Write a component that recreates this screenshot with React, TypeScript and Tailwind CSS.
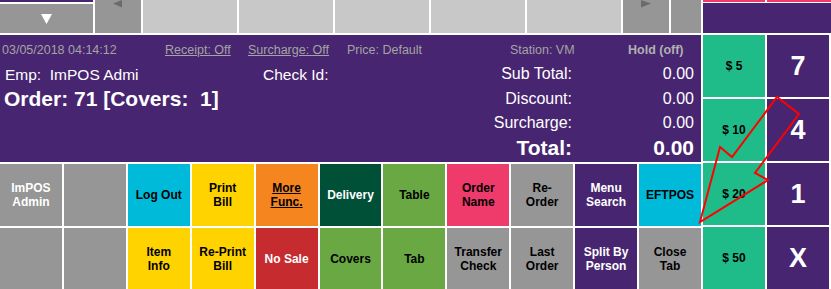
import React from 'react';

type Btn = { lines: string[]; cls: string; underline?: boolean };

const row1: Btn[] = [
  { lines: ['ImPOS', 'Admin'], cls: 'bg-[#969696] text-white' },
  { lines: [], cls: 'bg-[#969696]' },
  { lines: ['Log Out'], cls: 'bg-[#00bad9] text-black' },
  { lines: ['Print', 'Bill'], cls: 'bg-[#ffd300] text-black' },
  { lines: ['More', 'Func.'], cls: 'bg-[#f5861f] text-black', underline: true },
  { lines: ['Delivery'], cls: 'bg-[#004f37] text-white' },
  { lines: ['Table'], cls: 'bg-[#69a843] text-black' },
  { lines: ['Order', 'Name'], cls: 'bg-[#ef3a6c] text-black' },
  { lines: ['Re-', 'Order'], cls: 'bg-[#969696] text-black' },
  { lines: ['Menu', 'Search'], cls: 'bg-[#482570] text-white' },
  { lines: ['EFTPOS'], cls: 'bg-[#00bad9] text-black' },
];

const row2: Btn[] = [
  { lines: [], cls: 'bg-[#969696]' },
  { lines: [], cls: 'bg-[#969696]' },
  { lines: ['Item', 'Info'], cls: 'bg-[#ffd300] text-black' },
  { lines: ['Re-Print', 'Bill'], cls: 'bg-[#ffd300] text-black' },
  { lines: ['No Sale'], cls: 'bg-[#c62b30] text-white' },
  { lines: ['Covers'], cls: 'bg-[#69a843] text-black' },
  { lines: ['Tab'], cls: 'bg-[#69a843] text-black' },
  { lines: ['Transfer', 'Check'], cls: 'bg-[#969696] text-black' },
  { lines: ['Last', 'Order'], cls: 'bg-[#969696] text-black' },
  { lines: ['Split By', 'Person'], cls: 'bg-[#482570] text-white' },
  { lines: ['Close', 'Tab'], cls: 'bg-[#969696] text-black' },
];

const cash = ['$ 5', '$ 10', '$ 20', '$ 50'];
const keys = ['7', '4', '1', 'X'];

const ButtonRow = ({ items, h }: { items: Btn[]; h: string }) => (
  <div className={`flex gap-[2px] ${h}`}>
    {items.map((b, i) => (
      <div
        key={i}
        className={`flex-1 flex flex-col items-center justify-center text-center text-[12px] font-bold leading-[14px] ${b.cls}`}
      >
        {b.lines.map((l, j) => (
          <span key={j} className={b.underline ? 'underline' : ''}>
            {l}
          </span>
        ))}
      </div>
    ))}
  </div>
);

const TotalRow = ({ label, value, big }: { label: string; value: string; big?: boolean }) => (
  <>
    <div className={`w-[132px] text-right ${big ? 'text-[21px] font-bold' : 'text-[16px]'}`}>{label}</div>
    <div className={`w-[122px] text-right ${big ? 'text-[21px] font-bold' : 'text-[16px]'}`}>{value}</div>
  </>
);

export default function App() {
  return (
    <div
      className="relative w-[831px] h-[289px] bg-white overflow-hidden flex flex-col select-none"
      style={{ fontFamily: '"Liberation Sans", Arial, sans-serif' }}
    >
      {/* Top bar */}
      <div className="flex gap-[2px] h-[33px]">
        <div className="w-[93px] flex flex-col">
          <div className="h-[2px] bg-[#482570]" />
          <div className="mt-[2px] flex-1 bg-[#969696] flex items-center justify-center">
            <svg width="11" height="10" viewBox="0 0 11 10">
              <polygon points="0,0 11,0 5.5,10" fill="#fff" />
            </svg>
          </div>
        </div>
        <div className="w-[46px] bg-[#969696] relative">
          <svg className="absolute left-[18px] top-0" width="10" height="8" viewBox="0 0 10 8">
            <polygon points="0,3.5 9,0 9,7.5" fill="#6b6b6b" />
          </svg>
        </div>
        {[0, 1, 2, 3, 4].map((i) => (
          <div key={i} className="w-[94px] bg-[#c8c8c8]" />
        ))}
        <div className="w-[46px] bg-[#969696] relative">
          <svg className="absolute left-[18px] top-0" width="10" height="8" viewBox="0 0 10 8">
            <polygon points="0,0 10,3.5 0,7.5" fill="#6b6b6b" />
          </svg>
        </div>
        <div className="w-[30px] bg-[#969696]" />
        <div className="w-[128px] flex flex-col">
          <div className="flex gap-[2px] h-[2px]">
            <div className="w-[62px] bg-[#ef3a6c]" />
            <div className="flex-1 bg-[#ef3a6c]" />
          </div>
          <div className="mt-[1px] flex-1 bg-[#482570]" />
        </div>
      </div>

      {/* Body */}
      <div className="flex gap-[2px] mt-[2px] flex-1">
        <div className="w-[701px] flex flex-col gap-[2px]">
          {/* Info panel */}
          <div className="h-[127px] bg-[#482570] text-white pt-[3px]">
            <div className="flex items-center h-[24px] text-[12.5px] text-[#a4a4a4]">
              <div className="w-[165px] pl-[2px]">03/05/2018 04:14:12</div>
              <div className="w-[83px] underline">Receipt: Off</div>
              <div className="w-[99px] underline">Surcharge: Off</div>
              <div className="w-[163px]">Price: Default</div>
              <div className="w-[118px]">Station: VM</div>
              <div className="font-bold text-[#b0b0b0]">Hold (off)</div>
            </div>
            <div className="flex items-center h-[24.5px]">
              <div className="w-[263px] pl-[5px] text-[15.5px] whitespace-pre">Emp:  ImPOS Admi</div>
              <div className="w-[177px] text-[15.5px]">Check Id:</div>
              <TotalRow label="Sub Total:" value="0.00" />
            </div>
            <div className="flex items-center h-[24.5px]">
              <div className="w-[440px] pl-[4px] text-[21px] font-bold whitespace-pre">Order: 71 [Covers:  1]</div>
              <TotalRow label="Discount:" value="0.00" />
            </div>
            <div className="flex items-center h-[24.5px]">
              <div className="w-[440px]" />
              <TotalRow label="Surcharge:" value="0.00" />
            </div>
            <div className="flex items-center h-[24.5px]">
              <div className="w-[440px]" />
              <TotalRow label="Total:" value="0.00" big />
            </div>
          </div>
          <ButtonRow items={row1} h="h-[62px]" />
          <ButtonRow items={row2} h="flex-1" />
        </div>

        {/* Cash + keypad */}
        <div className="w-[126px] grid grid-cols-2 grid-rows-4 gap-[2px]">
          {cash.map((c, i) => (
            <React.Fragment key={c}>
              <div className="bg-[#1fbc8a] flex items-center justify-center text-[12px] font-bold text-black">
                {c}
              </div>
              <div className="bg-[#482570] flex items-center justify-center text-[27px] font-bold text-white">
                {keys[i]}
              </div>
            </React.Fragment>
          ))}
        </div>
      </div>

      {/* Red arrow annotation */}
      <svg className="absolute inset-0 pointer-events-none" width="831" height="289" viewBox="0 0 831 289">
        <polygon
          points="700,222 720,147 732,157 777,97 799,114 755,173 768,180"
          fill="none"
          stroke="#ff0000"
          strokeWidth="2"
          strokeLinejoin="miter"
        />
      </svg>
    </div>
  );
}
